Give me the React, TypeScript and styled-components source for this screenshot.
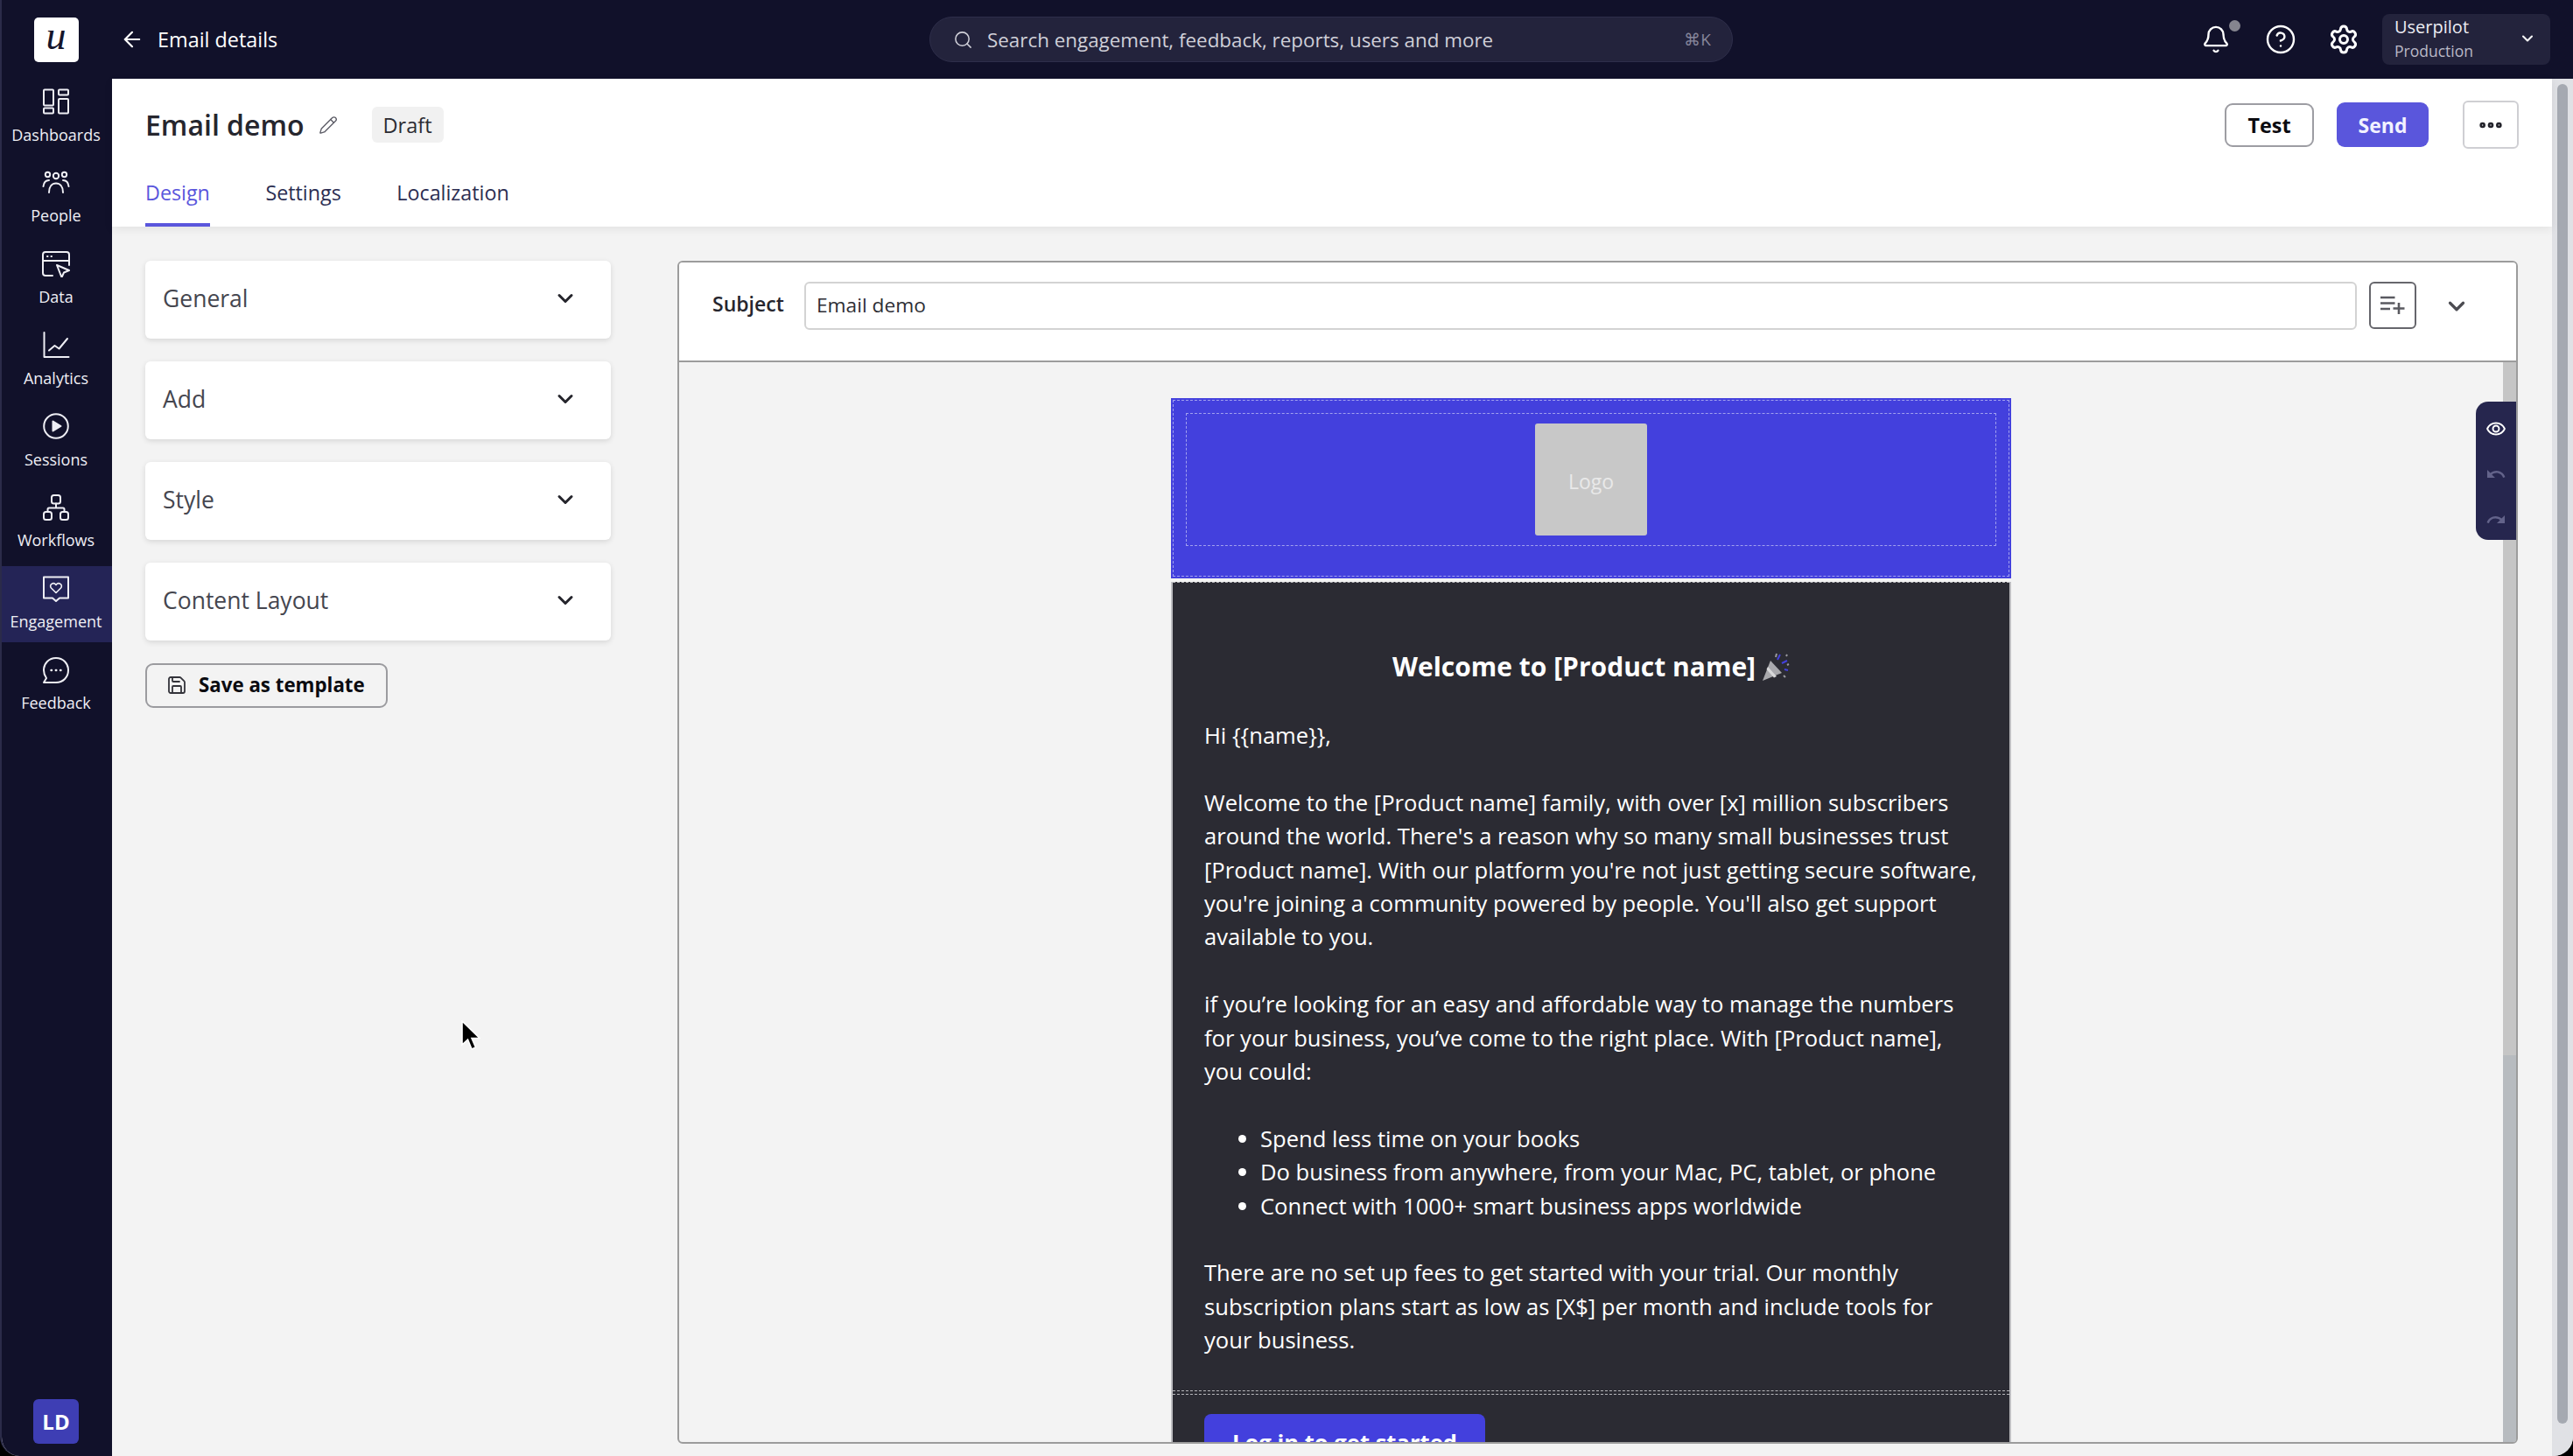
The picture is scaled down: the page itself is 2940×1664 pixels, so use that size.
import React from "react";
import styled, { createGlobalStyle } from "styled-components";
import {
  ArrowLeft,
  Bell,
  ChevronDown,
  CircleHelp,
  Ellipsis,
  Pencil,
  Save,
  Search,
  Settings,
} from "lucide-react";
import { MdOutlineRemoveRedEye, MdRedo, MdUndo } from "react-icons/md";

const GlobalStyle = createGlobalStyle`
  html, body {
    margin: 0;
    padding: 0;
    height: 100%;
    background: #000;
  }
  body {
    font-family: "Open Sans", "Noto Sans", sans-serif;
    overflow: hidden;
  }
  * { box-sizing: border-box; }
`;

const Shell = styled.div`
  position: relative;
  width: 2940px;
  height: 1664px;
  display: flex;
  flex-direction: column;
  overflow: hidden;
  background: #f3f3f3;
  border-left: 2px solid #2b2b49;
  border-radius: 0 0 22px 22px;
`;

/* top bar */
const TopBar = styled.header`
  height: 90px;
  flex: none;
  display: grid;
  grid-template-columns: 1060px 918px 1fr;
  align-items: center;
  background: #11112a;
  color: #fff;
`;

const TopLeft = styled.div`
  display: flex;
  align-items: center;
`;

const LogoCell = styled.div`
  width: 126px;
  padding-right: 2px;
  display: flex;
  justify-content: center;
`;

const Logo = styled.div`
  width: 51px;
  height: 51px;
  border-radius: 5px;
  background: #fff;
  color: #15152b;
  display: flex;
  align-items: center;
  justify-content: center;
  font-family: "Liberation Serif", serif;
  font-style: italic;
  font-size: 46px;
  line-height: 46px;
  padding-bottom: 8px;
`;

const BackLink = styled.div`
  display: flex;
  align-items: center;
  gap: 15px;
  margin-left: 9px;
  font-size: 23.4px;
  font-weight: 500;
`;

const SearchBar = styled.div`
  height: 52px;
  display: flex;
  align-items: center;
  gap: 16px;
  padding: 0 24px 0 26px;
  border: 1px solid #2e2e4a;
  border-radius: 26px;
  background: #23233c;
  color: #cfcfd8;
  font-size: 22.4px;
`;

const SearchText = styled.span`
  flex: 1;
`;

const Shortcut = styled.span`
  color: #85859a;
  font-size: 19px;
`;

const TopRight = styled.div`
  display: flex;
  align-items: center;
  justify-content: flex-end;
  padding-right: 26px;
`;

const BellWrap = styled.div`
  position: relative;
  display: flex;
  margin-right: 38.5px;
`;

const BellDot = styled.span`
  position: absolute;
  top: -5px;
  right: -11px;
  width: 13px;
  height: 13px;
  border-radius: 50%;
  background: #85858f;
`;

const TopIcon = styled.div`
  display: flex;
  margin-right: 36.5px;
`;

const GearIcon = styled(TopIcon)`
  margin-right: 26px;
`;

const Account = styled.div`
  width: 192px;
  height: 58px;
  display: flex;
  align-items: center;
  padding: 0 16px 2px 14px;
  border-radius: 8px;
  background: #23233c;
`;

const AccountText = styled.div`
  flex: 1;
  display: flex;
  flex-direction: column;
`;

const AccountName = styled.span`
  font-size: 20px;
  line-height: 28px;
  color: #ececf2;
`;

const AccountEnv = styled.span`
  font-size: 17.5px;
  line-height: 27px;
  color: #b9b9c6;
`;

/* sidebar */
const Body = styled.div`
  flex: 1;
  min-height: 0;
  display: flex;
`;

const Sidebar = styled.nav`
  width: 126px;
  flex: none;
  display: flex;
  flex-direction: column;
  gap: 5.8px;
  background: #11112a;
  padding-bottom: 14px;
`;

const NavItem = styled.div<{ $active?: boolean }>`
  height: 87px;
  flex: none;
  display: flex;
  flex-direction: column;
  align-items: center;
  padding: 11px 2px 0 0;
  gap: 9.5px;
  background: ${(p) => (p.$active ? "#242456" : "transparent")};
  color: #eeeef4;
  font-size: 18px;
  line-height: 26px;
  svg {
    display: block;
    width: 32px;
    height: 30px;
    fill: none;
    stroke: currentColor;
    stroke-width: 2;
    stroke-linecap: round;
    stroke-linejoin: round;
  }
`;

const Avatar = styled.div`
  width: 52px;
  height: 51px;
  margin: auto 0 0 36px;
  border-radius: 6px;
  background: #3e3eb4;
  color: #fff;
  display: flex;
  align-items: center;
  justify-content: center;
  font-size: 24px;
  font-weight: 700;
`;

/* main column */
const Main = styled.main`
  flex: 1;
  min-width: 0;
  display: flex;
  flex-direction: column;
`;

const PageHeader = styled.div`
  height: 169px;
  flex: none;
  display: flex;
  flex-direction: column;
  background: #fff;
  box-shadow: 0 3px 10px rgba(0, 0, 0, 0.07);
  padding: 25px 38px 0;
  position: relative;
  z-index: 1;
`;

const TitleRow = styled.div`
  height: 55px;
  display: flex;
  align-items: center;
`;

const Title = styled.h1`
  margin: 0;
  font-size: 32px;
  font-weight: 600;
  color: #26262e;
`;

const EditIcon = styled.span`
  display: flex;
  margin: 0 39px 0 16px;
  color: #5c5c66;
`;

const Badge = styled.span`
  height: 41px;
  padding: 0 13px;
  display: flex;
  align-items: center;
  border-radius: 6px;
  background: #f1f1f1;
  color: #2c2c33;
  font-size: 23.5px;
  font-weight: 500;
`;

const Actions = styled.div`
  margin-left: auto;
  display: flex;
  align-items: center;
`;

const GhostButton = styled.button`
  width: 102px;
  height: 50px;
  border: 2px solid #9d9da3;
  border-radius: 9px;
  background: #fff;
  color: #0b0b10;
  font: 700 23.4px "Open Sans", sans-serif;
`;

const PrimaryButton = styled.button`
  width: 105px;
  height: 51px;
  margin-left: 26px;
  border: 0;
  border-radius: 9px;
  background: #5a56dc;
  color: #f2f2ff;
  font: 700 23px "Open Sans", sans-serif;
`;

const MoreButton = styled.button`
  width: 64px;
  height: 55px;
  margin-left: 39px;
  display: flex;
  align-items: center;
  justify-content: center;
  border: 2px solid #cfcfd3;
  border-radius: 6px;
  background: #fff;
  color: #24242c;
`;

const Tabs = styled.div`
  margin-top: auto;
  display: flex;
  gap: 63.5px;
`;

const Tab = styled.div<{ $active?: boolean }>`
  height: 67px;
  padding-top: 9px;
  border-bottom: 4px solid ${(p) => (p.$active ? "#5a56dc" : "transparent")};
  color: ${(p) => (p.$active ? "#5a56dc" : "#2c2e52")};
  font-size: 23.3px;
  font-weight: 500;
  line-height: 38px;
`;

const Content = styled.div`
  flex: 1;
  min-height: 0;
  display: flex;
  gap: 76px;
  padding: 39px 39px 14px 38px;
`;

/* left column */
const LeftColumn = styled.div`
  width: 532px;
  flex: none;
  display: flex;
  flex-direction: column;
  align-items: flex-start;
  gap: 26px;
`;

const AccordionCard = styled.div`
  width: 100%;
  height: 89px;
  display: flex;
  align-items: center;
  justify-content: space-between;
  padding: 0 38px 3px 20px;
  border-radius: 6px;
  background: #fff;
  box-shadow: 0 2px 6px rgba(0, 0, 0, 0.12);
  color: #45464f;
  font-size: 26.5px;
  font-weight: 500;
  svg {
    color: #25252c;
  }
`;

const SaveButton = styled.button`
  width: 277px;
  height: 51px;
  display: flex;
  align-items: center;
  gap: 13px;
  padding: 0 0 2px 22px;
  border: 2px solid #9b9b9f;
  border-radius: 9px;
  background: transparent;
  color: #0b0b10;
  font: 700 22.3px "Open Sans", sans-serif;
  svg {
    color: #33333a;
  }
`;

/* editor */
const Editor = styled.section`
  position: relative;
  flex: 1;
  min-width: 0;
  display: flex;
  flex-direction: column;
  border: 2px solid #9c9c9c;
  border-radius: 6px;
  overflow: hidden;
`;

const SubjectRow = styled.div`
  height: 114px;
  flex: none;
  display: flex;
  align-items: flex-start;
  padding: 22px 53px 0 38px;
  background: #fff;
  border-bottom: 2px solid #9c9c9c;
`;

const SubjectLabel = styled.label`
  width: 105px;
  flex: none;
  line-height: 51px;
  color: #26262e;
  font-size: 23px;
  font-weight: 600;
`;

const SubjectInput = styled.div`
  flex: 1;
  height: 55px;
  display: flex;
  align-items: center;
  padding: 0 0 2px 12px;
  border: 2px solid #d3d3d3;
  border-radius: 6px;
  color: #2e2e35;
  font-size: 22.7px;
`;

const InsertButton = styled.div`
  width: 54px;
  height: 54px;
  margin-left: 14px;
  display: flex;
  align-items: center;
  justify-content: center;
  border: 2px solid #66666c;
  border-radius: 6px;
  color: #5a5a60;
`;

const SubjectChevron = styled.div`
  display: flex;
  align-items: center;
  height: 55px;
  margin-left: 31px;
  color: #4c4c52;
`;

const Canvas = styled.div`
  flex: 1;
  min-height: 0;
  display: flex;
`;

const CanvasBody = styled.div`
  flex: 1;
  min-width: 0;
  display: flex;
  justify-content: center;
  padding-top: 41px;
  overflow: hidden;
`;

const CanvasTrack = styled.div`
  width: 15px;
  flex: none;
  display: flex;
  flex-direction: column;
  background: #c5c5c5;
`;

const CanvasThumb = styled.div`
  flex: 1;
  margin-top: 792px;
  background: #b7bbbf;
`;

const FloatingTools = styled.div`
  position: absolute;
  top: 159px;
  right: 0;
  width: 46px;
  height: 158px;
  display: flex;
  flex-direction: column;
  align-items: center;
  gap: 28px;
  padding-top: 19px;
  border-radius: 14px 0 0 14px;
  background: #26264e;
`;

const ToolIcon = styled.span<{ $muted?: boolean }>`
  display: flex;
  color: ${(p) => (p.$muted ? "#63638a" : "#fff")};
`;

/* email preview */
const Email = styled.article`
  width: 960px;
  flex: none;
`;

const EmailHeader = styled.div`
  height: 206px;
  padding: 18px;
  background: #4340dd;
  outline: 1.5px dashed rgba(255, 255, 255, 0.5);
  outline-offset: -3px;
`;

const HeaderInner = styled.div`
  height: 150px;
  display: flex;
  justify-content: center;
  padding-top: 11px;
  outline: 1.5px dashed rgba(255, 255, 255, 0.5);
`;

const LogoBox = styled.div`
  width: 128px;
  height: 128px;
  display: flex;
  align-items: center;
  justify-content: center;
  padding-top: 4px;
  border-radius: 3px;
  background: #c8c8c8;
  color: #e9e9e9;
  font-size: 23px;
`;

const EmailBody = styled.div`
  margin-top: 4px;
  background: #2b2b33;
  border: solid #bdbdc1;
  border-width: 0 2px;
  color: #fff;
`;

const TextBlock = styled.div`
  padding: 72.5px 36px 37px;
  border-top: 1.5px dashed #b9b9bd;
  border-bottom: 1.5px dashed #b9b9bd;
  font-size: 25.6px;
  line-height: 38.4px;
`;

const Headline = styled.h2`
  margin: 0 0 37.5px;
  display: flex;
  justify-content: center;
  align-items: center;
  gap: 7px;
  font-size: 30px;
  font-weight: 700;
  line-height: 46px;
`;

const Para = styled.p`
  margin: 0 0 38.4px;
  &:last-child {
    margin-bottom: 0;
  }
`;

const Bullets = styled.ul`
  margin: 0 0 38.4px;
  padding-left: 64px;
`;

const ButtonBlock = styled.div`
  margin-top: 3px;
  padding: 22px 36px;
  border-top: 1.5px dashed #b9b9bd;
`;

const CtaButton = styled.div`
  width: 321px;
  height: 66px;
  display: flex;
  align-items: center;
  justify-content: center;
  border-radius: 8px;
  background: #4340dd;
  color: #fff;
  font-size: 25.6px;
  font-weight: 700;
`;

/* page scrollbar + pointer */
const PageTrack = styled.div`
  width: 24px;
  flex: none;
  padding: 6px 6px 37px;
  background: #e0e1e5;
`;

const PageThumb = styled.div`
  height: 100%;
  border-radius: 6px;
  background: #a5a9b1;
`;

const Pointer = styled.svg`
  position: absolute;
  left: 523px;
  top: 1166px;
  width: 24px;
  height: 36px;
`;

const navItems: { label: string; active?: boolean; icon: React.ReactNode }[] = [
  {
    label: "Dashboards",
    icon: (
      <svg viewBox="0 0 32 30">
        <rect x="2" y="1.5" width="11" height="18" rx="1" />
        <rect x="2" y="22.5" width="11" height="6" rx="1" />
        <rect x="19" y="1.5" width="11" height="6" rx="1" />
        <rect x="19" y="12" width="11" height="16.5" rx="1" />
      </svg>
    ),
  },
  {
    label: "People",
    icon: (
      <svg viewBox="0 0 32 30">
        <circle cx="6.5" cy="5.5" r="2.7" />
        <circle cx="16" cy="7" r="3.2" />
        <circle cx="25.5" cy="5.5" r="2.7" />
        <path d="M8 26c0-7 3.500-10.500 8-10.500S24 19 24 26" />
        <path d="M1.500 19c.5-4.500 3-7 6.500-7M30.500 19c-.5-4.500-3-7-6.500-7" />
      </svg>
    ),
  },
  {
    label: "Data",
    icon: (
      <svg viewBox="0 0 32 30">
        <path d="M12 28H4a3 3 0 0 1-3-3V4a3 3 0 0 1 3-3h24a3 3 0 0 1 3 3v12" />
        <path d="M1 11h30" />
        <path d="M6 6h.5M10.500 6h.5" />
        <path d="M17 16l14 6-6 2.500-2.500 5.500z" />
      </svg>
    ),
  },
  {
    label: "Analytics",
    icon: (
      <svg viewBox="0 0 32 30">
        <path d="M2.500 1v28h28" />
        <path d="M8 21.500l6.500-5.500 5 3.500L29 8" />
      </svg>
    ),
  },
  {
    label: "Sessions",
    icon: (
      <svg viewBox="0 0 32 30">
        <circle cx="16" cy="15" r="13.800" />
        <path d="M12.500 9.500v11l9-5.500z" fill="currentColor" />
      </svg>
    ),
  },
  {
    label: "Workflows",
    icon: (
      <svg viewBox="0 0 32 30">
        <rect x="11" y="1" width="10" height="9.500" rx="2.500" />
        <rect x="2" y="20" width="9" height="9" rx="2.500" />
        <rect x="21" y="20" width="9" height="9" rx="2.500" />
        <path d="M16 10.500V15.500M6.500 20v-3a1.500 1.500 0 0 1 1.500-1.500h16a1.500 1.500 0 0 1 1.500 1.500v3" />
      </svg>
    ),
  },
  {
    label: "Engagement",
    active: true,
    icon: (
      <svg viewBox="0 0 32 30">
        <path d="M2 1.500h28v24H20l-4 3.500-4-3.500H2z" />
        <path d="M16 19.500l-5.500-5.500c-3-3.500 2.500-7.500 5.500-3.500 3-4 8.500 0 5.500 3.500z" strokeWidth="1.600" />
      </svg>
    ),
  },
  {
    label: "Feedback",
    icon: (
      <svg viewBox="0 0 32 30">
        <path d="M16 1C8 1 2 7 2 15c0 3.500 1.200 6.500 3 9l-3 5h14c8 0 14-6 14-14S24 1 16 1z" />
        <path d="M10.500 15h.5M15.800 15h.5M21 15h.5" strokeWidth="2.400" />
      </svg>
    ),
  },
];

const panels = ["General", "Add", "Style", "Content Layout"];
const tabs = ["Design", "Settings", "Localization"];

const PartyPopper = () => (
  <svg width="32" height="34" viewBox="0 0 32 34">
    <path d="M1 33l9-23 13 14z" fill="#a9a9ad" />
    <path d="M7 17l10 11-3 1.500L5.500 20z" fill="#d8d8da" />
    <path d="M18 9l3-6M23 13l6-3M26 20l4 1" stroke="#4340dd" strokeWidth="2" />
    <path d="M16 6l1-4M28 5l1-2M25 27l2 2M29 15l2-1" stroke="#9a9aa0" strokeWidth="2" />
  </svg>
);

const InsertFieldIcon = () => (
  <svg width="28" height="22" viewBox="0 0 28 22" fill="none" stroke="currentColor" strokeWidth="2.6">
    <path d="M0 2h16.500M0 8.500h16.500M0 15h11" />
    <path d="M21 8v13M14.500 14.500h13" />
  </svg>
);

const App = () => {
  return (
    <Shell>
      <GlobalStyle />
      <TopBar>
        <TopLeft>
          <LogoCell>
            <Logo>u</Logo>
          </LogoCell>
          <BackLink>
            <ArrowLeft size={28} strokeWidth={1.9} />
            Email details
          </BackLink>
        </TopLeft>
        <SearchBar>
          <Search size={23} strokeWidth={1.6} />
          <SearchText>Search engagement, feedback, reports, users and more</SearchText>
          <Shortcut>⌘K</Shortcut>
        </SearchBar>
        <TopRight>
          <BellWrap>
            <Bell size={34} strokeWidth={1.7} />
            <BellDot />
          </BellWrap>
          <TopIcon>
            <CircleHelp size={36} strokeWidth={1.6} />
          </TopIcon>
          <GearIcon>
            <Settings size={36} strokeWidth={2} />
          </GearIcon>
          <Account>
            <AccountText>
              <AccountName>Userpilot</AccountName>
              <AccountEnv>Production</AccountEnv>
            </AccountText>
            <ChevronDown size={20} strokeWidth={2.4} />
          </Account>
        </TopRight>
      </TopBar>
      <Body>
        <Sidebar>
          {navItems.map((item) => (
            <NavItem key={item.label} $active={item.active}>
              {item.icon}
              {item.label}
            </NavItem>
          ))}
          <Avatar>LD</Avatar>
        </Sidebar>
        <Main>
          <PageHeader>
            <TitleRow>
              <Title>Email demo</Title>
              <EditIcon>
                <Pencil size={22} strokeWidth={1.5} />
              </EditIcon>
              <Badge>Draft</Badge>
              <Actions>
                <GhostButton>Test</GhostButton>
                <PrimaryButton>Send</PrimaryButton>
                <MoreButton>
                  <Ellipsis size={32} strokeWidth={3} />
                </MoreButton>
              </Actions>
            </TitleRow>
            <Tabs>
              {tabs.map((tab, i) => (
                <Tab key={tab} $active={i === 0}>
                  {tab}
                </Tab>
              ))}
            </Tabs>
          </PageHeader>
          <Content>
            <LeftColumn>
              {panels.map((panel) => (
                <AccordionCard key={panel}>
                  {panel}
                  <ChevronDown size={28} strokeWidth={2.6} />
                </AccordionCard>
              ))}
              <SaveButton>
                <Save size={24} strokeWidth={1.8} />
                Save as template
              </SaveButton>
            </LeftColumn>
            <Editor>
              <SubjectRow>
                <SubjectLabel>Subject</SubjectLabel>
                <SubjectInput>Email demo</SubjectInput>
                <InsertButton>
                  <InsertFieldIcon />
                </InsertButton>
                <SubjectChevron>
                  <ChevronDown size={30} strokeWidth={2.6} />
                </SubjectChevron>
              </SubjectRow>
              <Canvas>
                <CanvasBody>
                  <Email>
                    <EmailHeader>
                      <HeaderInner>
                        <LogoBox>Logo</LogoBox>
                      </HeaderInner>
                    </EmailHeader>
                    <EmailBody>
                      <TextBlock>
                        <Headline>
                          Welcome to [Product name] <PartyPopper />
                        </Headline>
                        <Para>Hi {"{{name}}"},</Para>
                        <Para>
                          Welcome to the [Product name] family, with over [x] million subscribers
                          around the world. There's a reason why so many small businesses trust
                          [Product name]. With our platform you're not just getting secure software,
                          you're joining a community powered by people. You'll also get support
                          available to you.
                        </Para>
                        <Para>
                          if you’re looking for an easy and affordable way to manage the numbers for
                          your business, you’ve come to the right place. With [Product name], you
                          could:
                        </Para>
                        <Bullets>
                          <li>Spend less time on your books</li>
                          <li>Do business from anywhere, from your Mac, PC, tablet, or phone</li>
                          <li>Connect with 1000+ smart business apps worldwide</li>
                        </Bullets>
                        <Para>
                          There are no set up fees to get started with your trial. Our monthly
                          subscription plans start as low as [X$] per month and include tools for
                          your business.
                        </Para>
                      </TextBlock>
                      <ButtonBlock>
                        <CtaButton>Log in to get started</CtaButton>
                      </ButtonBlock>
                    </EmailBody>
                  </Email>
                </CanvasBody>
                <CanvasTrack>
                  <CanvasThumb />
                </CanvasTrack>
              </Canvas>
              <FloatingTools>
                <ToolIcon>
                  <MdOutlineRemoveRedEye size={24} />
                </ToolIcon>
                <ToolIcon $muted>
                  <MdUndo size={24} />
                </ToolIcon>
                <ToolIcon $muted>
                  <MdRedo size={24} />
                </ToolIcon>
              </FloatingTools>
            </Editor>
          </Content>
        </Main>
        <PageTrack>
          <PageThumb />
        </PageTrack>
      </Body>
      <Pointer viewBox="0 0 24 36">
        <path d="M3 1v27l6.500-6 4.500 11 4.500-2-4.500-10.500H23z" fill="#000" stroke="#fff" strokeWidth="1.600" />
      </Pointer>
    </Shell>
  );
};

export default App;
